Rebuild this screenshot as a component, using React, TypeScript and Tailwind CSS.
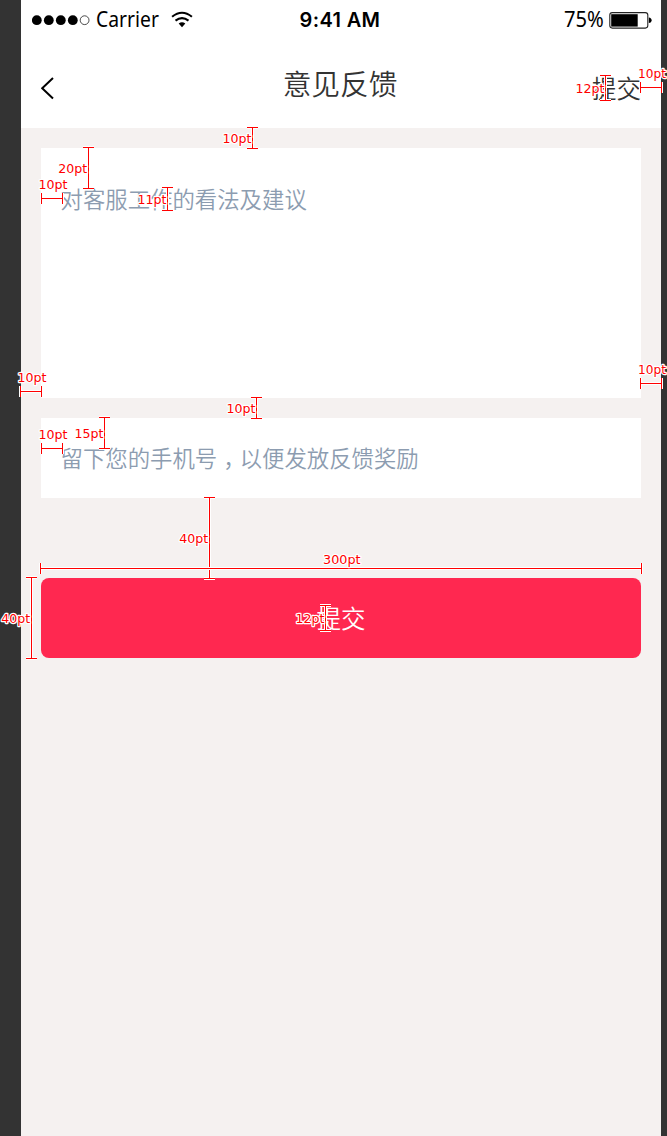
type Measure = {
  label: string;
  tx: number;
  ty: number;
  w: number;
  dir: "h" | "v";
  from: number;
  to: number;
  at: number;
};

const measures: Measure[] = [
  { label: "10pt", tx: 638, ty: 78, w: 28, dir: "h", from: 640, to: 661, at: 87 },
  { label: "12pt", tx: 575.5, ty: 93, w: 29, dir: "v", from: 75, to: 100, at: 605 },
  { label: "10pt", tx: 222.5, ty: 143, w: 29, dir: "v", from: 127, to: 148, at: 252 },
  { label: "20pt", tx: 58.3, ty: 173, w: 29, dir: "v", from: 147, to: 188, at: 88 },
  { label: "10pt", tx: 38.5, ty: 189, w: 29, dir: "h", from: 41, to: 62, at: 198 },
  { label: "11pt", tx: 137.5, ty: 204, w: 29, dir: "v", from: 187, to: 210, at: 167 },
  { label: "10pt", tx: 638, ty: 374, w: 28, dir: "h", from: 640, to: 661, at: 383 },
  { label: "10pt", tx: 17.5, ty: 382, w: 29, dir: "h", from: 20, to: 41, at: 391 },
  { label: "10pt", tx: 226.5, ty: 413, w: 29, dir: "v", from: 397, to: 418, at: 256 },
  { label: "10pt", tx: 38.5, ty: 439, w: 29, dir: "h", from: 41, to: 62, at: 448 },
  { label: "15pt", tx: 74.5, ty: 438, w: 29, dir: "v", from: 417, to: 448, at: 104 },
  { label: "40pt", tx: 179.3, ty: 543, w: 29, dir: "v", from: 497, to: 578, at: 209 },
  { label: "300pt", tx: 323, ty: 564, w: 37.5, dir: "h", from: 40, to: 641, at: 568 },
  { label: "40pt", tx: 1.3, ty: 623, w: 29, dir: "v", from: 577, to: 658, at: 31 },
  { label: "12pt", tx: 295.5, ty: 623, w: 29, dir: "v", from: 605, to: 630, at: 325 },
];

function bracket({ dir, from, to, at }: Measure) {
  const a = from + 0.5;
  const b = to + 0.5;
  const c = at + 0.5;
  return dir === "h"
    ? `M${a} ${c}H${b}M${a} ${c - 5.5}v11M${b} ${c - 5.5}v11`
    : `M${c} ${a}V${b}M${c - 5.5} ${a}h11M${c - 5.5} ${b}h11`;
}

function Measurements() {
  return (
    <svg
      className="pointer-events-none absolute inset-0 font-['DejaVu_Sans',sans-serif] text-[12.5px]"
      width="667"
      height="1136"
      viewBox="0 0 667 1136"
    >
      {measures.map((m, i) => (
        <g key={i}>
          <path d={bracket(m)} fill="none" stroke="#fff" strokeWidth="3" />
          <path d={bracket(m)} fill="none" stroke="#f00" strokeWidth="1" />
          <text
            x={m.tx}
            y={m.ty}
            textLength={m.w}
            lengthAdjust="spacingAndGlyphs"
            fill="#f00"
            stroke="#fff"
            strokeWidth="2.4"
            strokeLinejoin="round"
            paintOrder="stroke"
          >
            {m.label}
          </text>
        </g>
      ))}
    </svg>
  );
}

function StatusBar() {
  return (
    <div className="grid h-10 grid-cols-[1fr_auto_1fr] items-center pr-2 pl-[11px] text-black">
      <div className="flex items-center">
        <svg width="58" height="12" viewBox="0 0 58 12">
          {[5, 17, 29, 41].map((x) => (
            <circle key={x} cx={x - 0.2} cy="6.2" r="4.9" />
          ))}
          <circle cx="52.6" cy="6.2" r="4.4" fill="none" stroke="#000" strokeWidth="0.7" />
        </svg>
        <span className="ml-[6px] w-[63px] origin-left scale-x-[0.92] pb-0.5 font-['Noto_Sans',sans-serif] text-[21px] leading-9 font-[450] whitespace-nowrap">
          Carrier
        </span>
        <svg className="ml-[12px]" width="22" height="18" viewBox="0 0 22 18">
          <path d="M1.1 5.8Q11 -2.3 20.9 5.8" fill="none" stroke="#000" strokeWidth="2.1" />
          <path d="M4.5 9.7Q11 4.6 17.5 9.7" fill="none" stroke="#000" strokeWidth="2.1" />
          <path d="M7.7 12.6Q11 10 14.3 12.6L11 16.3Z" />
        </svg>
      </div>
      <span className="mr-[5px] font-['Inter',sans-serif] text-[20px] leading-10 font-semibold tracking-[0.35px] whitespace-nowrap">
        9:41 AM
      </span>
      <div className="flex items-center justify-end">
        <span className="mr-[4px] w-[41px] origin-left scale-x-[0.96] pb-0.5 font-['Noto_Sans',sans-serif] text-[21px] leading-9 font-[450] whitespace-nowrap">
          75%
        </span>
        <svg width="44" height="18" viewBox="0 0 44 18">
          <rect x="0.8" y="1.6" width="38" height="15.5" rx="2.5" fill="none" stroke="#222" strokeWidth="1.1" />
          <rect x="2.2" y="3.2" width="26.5" height="12.4" />
          <path d="M39.8 6.4Q42.6 6.8 42.6 9.2T39.8 12Z" />
        </svg>
      </div>
    </div>
  );
}

export default function App() {
  return (
    <div className="relative h-[1136px] w-[667px] overflow-hidden bg-[#333333] pl-[21px] font-['Noto_Sans_CJK_SC',sans-serif]">
      <main className="h-full w-[640px] bg-[#f5f1f0]">
        <header className="h-32 bg-white">
          <StatusBar />
          <nav className="grid h-[88px] grid-cols-[1fr_auto_1fr] items-center px-5 text-[#333333]">
            <button aria-label="返回" className="pt-[7px]">
              <svg width="14" height="24" viewBox="0 0 14 24">
                <path d="M12 2L1.2 12.2L12 22.4" fill="none" stroke="#000" strokeWidth="2" />
              </svg>
            </button>
            <h1 className="mr-[2px] pb-[2px] text-[28.7px] leading-10 font-[350]">意见反馈</h1>
            <button className="justify-self-end pt-[7px] text-[24.5px] leading-9 font-[350]">提交</button>
          </nav>
        </header>
        <form className="flex flex-col px-5 pt-5">
          <div className="h-[250px] bg-white pt-8 pl-[19.5px] text-[22.4px] leading-9 font-[350] text-[#8c9cb0]">
            对客服工作的看法及建议
          </div>
          <div className="mt-5 h-20 bg-white pt-[21px] pl-[19.5px] text-[22.4px] leading-9 font-[350] text-[#8c9cb0]">
            留下您的手机号<span className="inline-block translate-x-[6px]">，</span>以便发放反馈奖励
          </div>
          <button
            type="button"
            className="mt-20 h-20 rounded-lg bg-[#ff2850] pb-px text-[24.5px] leading-9 font-[350] text-white"
          >
            提交
          </button>
        </form>
      </main>
      <Measurements />
    </div>
  );
}
